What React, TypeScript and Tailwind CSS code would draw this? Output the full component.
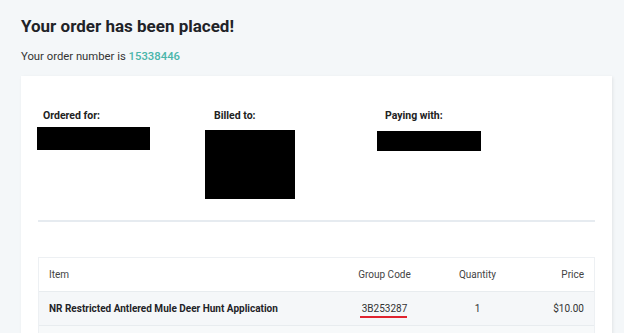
export default function App() {
  return (
    <div className="h-[333px] w-[624px] overflow-hidden bg-[#f4f7f9] font-['Roboto',sans-serif] text-[#222]">
      <div className="px-[21px] pt-[15px]">
        <h1 className="text-[17px] font-bold leading-[22px] text-[#1f2328]">Your order has been placed!</h1>
        <p className="mt-[12px] text-[11.3px] leading-[16px] text-[#333]">
          Your order number is <span className="font-medium text-[#4ab5aa]">15338446</span>
        </p>
      </div>

      <div className="ml-[21px] mt-[11px] w-[591px] bg-white px-[17px] pt-[33px] shadow-[1px_1px_3px_rgba(0,0,0,0.08)]">
        <div className="flex h-[111px]">
          {/* Ordered for */}
          <div className="w-[167px]">
            <div className="pl-[5px] text-[10.5px] font-bold leading-[14px] text-[#222]">Ordered for:</div>
            <div className="ml-[-1px] mt-[4px] h-[23px] w-[113px] bg-black" />
          </div>
          {/* Billed to */}
          <div className="w-[172px]">
            <div className="pl-[9px] text-[10.5px] font-bold leading-[14px] text-[#222]">Billed to:</div>
            <div className="mt-[7px] h-[69px] w-[90px] bg-black" />
          </div>
          {/* Paying with */}
          <div>
            <div className="pl-[8px] text-[10.5px] font-bold leading-[14px] text-[#222]">Paying with:</div>
            <div className="mt-[8px] h-[20px] w-[104px] bg-black" />
          </div>
        </div>

        <div className="h-[2px] bg-[#e6ebf0]" />

        <div className="mt-[35px] border border-[#edf0f3]">
          <div className="flex h-[33px] items-center px-[10px] text-[10px] text-[#444]">
            <div className="flex-1">Item</div>
            <div className="w-[93px] text-center">Group Code</div>
            <div className="w-[93px] text-center">Quantity</div>
            <div className="w-[60px] text-right">Price</div>
          </div>
          <div className="flex h-[34px] items-center border-t border-[#e8ecef] bg-[#f5f7f9] px-[10px] text-[10px] text-[#333]">
            <div className="flex-1 font-bold text-[#1f2328]">NR Restricted Antlered Mule Deer Hunt Application</div>
            <div className="flex w-[93px] justify-center">
              <span className="relative">
                3B253287
                <span className="absolute left-[-2px] right-0 top-[15px] h-[2px] bg-[#e0242f]" />
              </span>
            </div>
            <div className="w-[93px] text-center">1</div>
            <div className="w-[60px] text-right">$10.00</div>
          </div>
          <div className="h-[34px] border-t border-[#e8ecef] bg-[#f7f9fa]" />
        </div>
      </div>
    </div>
  );
}
